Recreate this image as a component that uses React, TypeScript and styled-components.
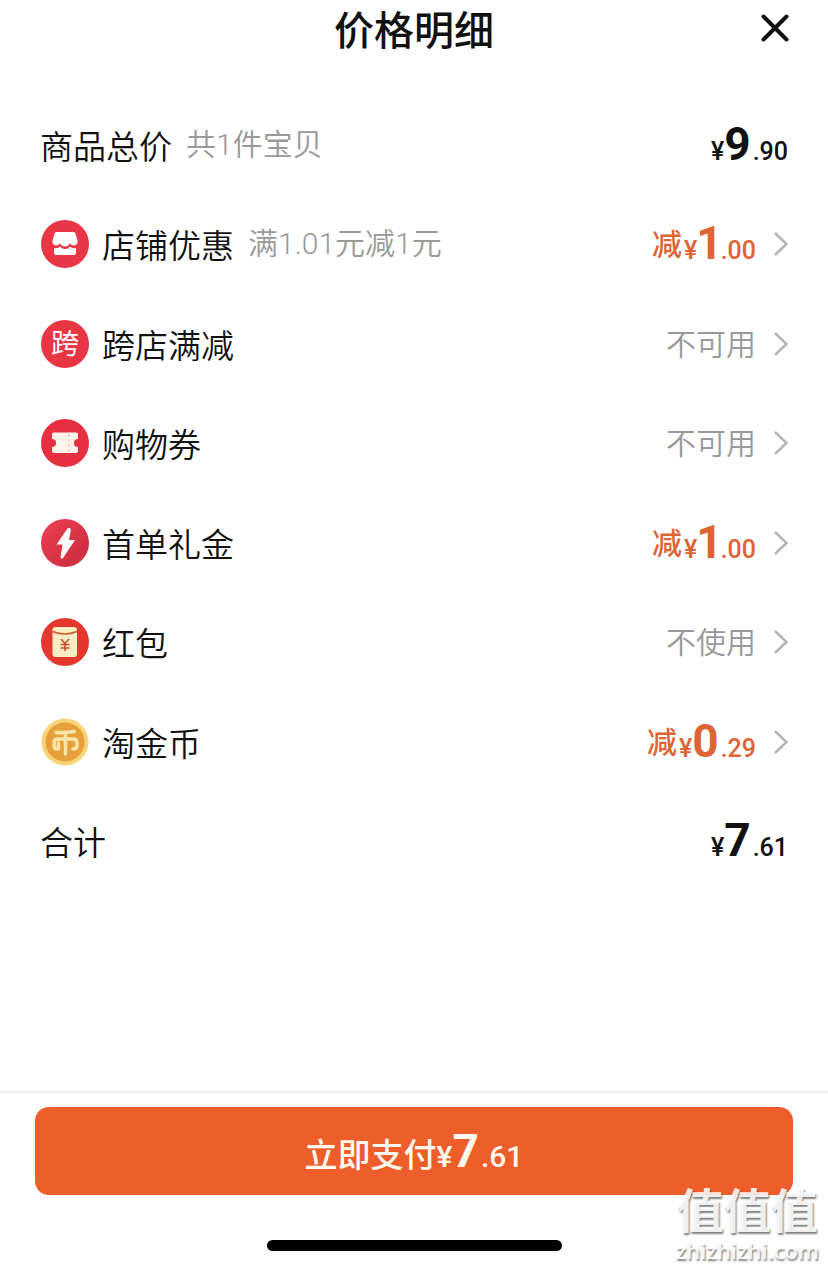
import React from "react";
import styled, { createGlobalStyle } from "styled-components";

const GlobalStyle = createGlobalStyle`
  * { box-sizing: border-box; }
  body {
    margin: 0;
    background: #fff;
    color: #111;
    font-family: "Noto Sans CJK SC", "Liberation Sans", sans-serif;
  }
  button {
    font: inherit;
    color: inherit;
    border: 0;
    padding: 0;
    background: none;
    cursor: pointer;
  }
`;

const Page = styled.div`
  position: relative;
  min-height: 100vh;
  display: flex;
  flex-direction: column;
`;

const Header = styled.header`
  display: grid;
  grid-template-columns: 1fr auto 1fr;
  align-items: center;
  height: 56px;
  padding: 0 36px;
`;

const Title = styled.h1`
  grid-column: 2;
  margin: 0;
  font-size: 40px;
  line-height: 56px;
  font-weight: 500;
`;

const CloseButton = styled.button`
  justify-self: end;
  display: flex;
`;

const List = styled.ul`
  list-style: none;
  margin: 39px 0 0;
  padding: 0 40px;
  display: grid;
  grid-auto-rows: 1fr;
  min-height: 796px;
`;

const Item = styled.li`
  display: flex;
`;

const Line = styled.div`
  flex: 1;
  display: flex;
  align-items: center;
  text-align: left;
`;

const Badge = styled.span`
  display: flex;
  flex: none;
  margin-right: 12px;
`;

const Label = styled.span`
  font-size: 33px;
  line-height: 48px;
  font-weight: 350;
`;

const Note = styled.span`
  margin-left: 14px;
  font-family: Roboto, "Noto Sans CJK SC", sans-serif;
  font-size: 30px;
  line-height: 48px;
  font-weight: 350;
  color: #999;
`;

const Value = styled.span<{ $tone?: "muted" | "accent" }>`
  display: flex;
  align-items: center;
  gap: 2px;
  margin-left: auto;
  font-size: 30px;
  line-height: 48px;
  font-weight: ${(p) => (p.$tone === "muted" ? 350 : 500)};
  color: ${(p) =>
    p.$tone === "muted" ? "#999" : p.$tone === "accent" ? "#dd6434" : "#111"};
`;

const ValueText = styled.span`
  padding-bottom: 4px;
`;

const Chevron = styled.span`
  display: flex;
  margin-left: 14px;
`;

const Money = styled.span`
  padding-top: 6px;
  font-family: Roboto, "Noto Sans CJK SC", sans-serif;
  font-size: 25px;
  font-weight: 500;
  white-space: nowrap;
`;

const Whole = styled.span<{ $narrow?: boolean }>`
  margin: ${(p) => (p.$narrow ? "0 -2px 0 -1px" : "0 2px 0 0")};
  font-size: 46px;
  line-height: 48px;
  font-weight: 700;
`;

const Footer = styled.footer`
  margin-top: auto;
  padding: 14px 35px 17px;
  border-top: 2px solid #ededed;
  display: flex;
  flex-direction: column;
  align-items: center;
`;

const PayButton = styled.button`
  && {
    width: 100%;
    height: 88px;
    padding-top: 6px;
    border-radius: 14px;
    background: #ed5e2b;
    color: #fffaf0;
    font-size: 33px;
    font-weight: 500;
    line-height: 48px;
  }
`;

const PayMoney = styled(Money)`
  font-size: 30px;
`;

const HomeBar = styled.div`
  margin-top: 45px;
  width: 295px;
  height: 11px;
  border-radius: 6px;
  background: #000;
`;

const Watermark = styled.div`
  position: absolute;
  right: 9px;
  bottom: 4px;
  display: flex;
  flex-direction: column;
  align-items: center;
  pointer-events: none;
  color: rgba(255, 255, 255, 0.9);
  text-shadow: 1px 2px 2px rgba(0, 0, 0, 0.5);
`;

const WatermarkName = styled.span`
  padding-bottom: 2px;
  font-size: 47px;
  line-height: 52px;
  font-weight: 700;
`;

const WatermarkSite = styled.span`
  font-family: "Open Sans", sans-serif;
  font-size: 22px;
  line-height: 28px;
  font-weight: 600;
`;

const glyph = { fontFamily: '"Noto Sans CJK SC", sans-serif' };

function Disc({ fill = "#e83645", children }: { fill?: string; children: React.ReactNode }) {
  return (
    <svg width="50" height="50" viewBox="0 0 50 50" aria-hidden="true">
      <circle cx="25" cy="25" r="24" fill={fill} />
      {children}
    </svg>
  );
}

const ShopIcon = () => (
  <Disc>
    <path
      d="M16.500 13H33.500Q35 13 35.500 14.500L37.500 21.500Q38 26 34 26.500Q31.500 26.500 30 24.500Q28 27.500 25 27.500Q22 27.500 20 24.500Q18.500 26.500 16 26.500Q12 26 12.500 21.500L14.500 14.500Q15 13 16.500 13Z"
      fill="#fff"
    />
    <path
      d="M14 29Q17.500 30 20 27.500Q22 30 25 30Q28 30 30 27.500Q32.500 30 36 29V34Q36 36 34 36H16Q14 36 14 34Z"
      fill="#fff"
    />
  </Disc>
);

const CrossIcon = () => (
  <Disc>
    <text x="25" y="35" fontSize="28" textAnchor="middle" fill="#fff" {...glyph}>跨</text>
  </Disc>
);

const TicketIcon = () => (
  <Disc fill="#e62f40">
    <path
      d="M14 14.500H36Q38 14.500 38 16.500V21A4 4 0 0 0 38 29V33Q38 35 36 35H14Q12 35 12 33V29A4 4 0 0 0 12 21V16.500Q12 14.500 14 14.500Z"
      fill="#fff4ea"
    />
    <path d="M29 16V34" stroke="#f6cdbd" strokeWidth="1.500" strokeDasharray="3 2" />
  </Disc>
);

const BoltIcon = () => (
  <Disc fill="url(#bolt-disc)">
    <defs>
      <linearGradient id="bolt-disc" x1="0" y1="0" x2="1" y2="1">
        <stop offset="0" stopColor="#ec3f52" />
        <stop offset="1" stopColor="#c92c3d" />
      </linearGradient>
    </defs>
    <path
      d="M27.500 10.500L16.500 26.500H22.500L20.500 39.500Q21 41.500 23 40L35 22H29L31 11.500Q30 9 27.500 10.500Z"
      fill="#fff"
    />
  </Disc>
);

const EnvelopeIcon = () => (
  <Disc fill="#e4372d">
    <rect x="12.500" y="10" width="24.500" height="30" rx="3" fill="#fdecc4" />
    <path d="M12.500 14.500Q24.500 19.500 37 14.500" fill="none" stroke="#c9582f" strokeWidth="1.500" />
    <path d="M21 22L25 26.500L29 22M25 26.500V34M20.500 27.500H29.500M20.500 31H29.500" fill="none" stroke="#c4502f" strokeWidth="1.700" />
  </Disc>
);

const CoinIcon = () => (
  <svg width="50" height="50" viewBox="0 0 50 50" aria-hidden="true">
    <circle cx="25" cy="25" r="23.500" fill="#f7d478" />
    <circle cx="25" cy="25" r="19.500" fill="#e6a03a" />
    <path
      d="M16 15.500Q25 16 34.500 14.500M25.500 16V37M17.500 32Q14 32 14 28.500V26Q14 22 18 22H33Q37 22 37 26V28.500Q37 32 33 32M18.500 26V32"
      fill="none"
      stroke="#fbe6a8"
      strokeWidth="3.500"
      strokeLinecap="round"
      strokeLinejoin="round"
    />
  </svg>
);

function Price({ whole, cents }: { whole: string; cents: string }) {
  return (
    <Money>
      ¥<Whole $narrow={whole === "1"}>{whole}</Whole>.{cents}
    </Money>
  );
}

type Row = {
  label: string;
  icon: () => React.ReactElement;
  note?: string;
  status?: string;
  off?: [string, string];
};

const rows: Row[] = [
  { label: "店铺优惠", icon: ShopIcon, note: "满1.01元减1元", off: ["1", "00"] },
  { label: "跨店满减", icon: CrossIcon, status: "不可用" },
  { label: "购物券", icon: TicketIcon, status: "不可用" },
  { label: "首单礼金", icon: BoltIcon, off: ["1", "00"] },
  { label: "红包", icon: EnvelopeIcon, status: "不使用" },
  { label: "淘金币", icon: CoinIcon, off: ["0", "29"] },
];

export default function App() {
  return (
    <>
      <GlobalStyle />
      <Page>
        <Header>
          <Title>价格明细</Title>
          <CloseButton type="button" aria-label="关闭">
            <svg width="34" height="34" viewBox="0 0 34 34" aria-hidden="true">
              <path d="M5.500 5.500L28.500 28.500M28.500 5.500L5.500 28.500" stroke="#111" strokeWidth="4" strokeLinecap="round" />
            </svg>
          </CloseButton>
        </Header>

        <List>
          <Item>
            <Line>
              <Label>商品总价</Label>
              <Note>共1件宝贝</Note>
              <Value>
                <Price whole="9" cents="90" />
              </Value>
            </Line>
          </Item>
          {rows.map(({ label, icon: Icon, note, status, off }) => (
            <Item key={label}>
              <Line as="button">
                <Badge>
                  <Icon />
                </Badge>
                <Label>{label}</Label>
                {note && <Note>{note}</Note>}
                <Value $tone={off ? "accent" : "muted"}>
                  <ValueText>{status ?? "减"}</ValueText>
                  {off && <Price whole={off[0]} cents={off[1]} />}
                </Value>
                <Chevron>
                  <svg width="18" height="26" viewBox="0 0 18 26" aria-hidden="true">
                    <path d="M5 2L16.500 13L5 24" fill="none" stroke="#b4b4b4" strokeWidth="2.500" />
                  </svg>
                </Chevron>
              </Line>
            </Item>
          ))}
          <Item>
            <Line>
              <Label>合计</Label>
              <Value>
                <Price whole="7" cents="61" />
              </Value>
            </Line>
          </Item>
        </List>

        <Footer>
          <PayButton type="button">
            立即支付
            <PayMoney>
              ¥<Whole>7</Whole>.61
            </PayMoney>
          </PayButton>
          <HomeBar />
        </Footer>

        <Watermark>
          <WatermarkName>值值值</WatermarkName>
          <WatermarkSite>zhizhizhi.com</WatermarkSite>
        </Watermark>
      </Page>
    </>
  );
}
